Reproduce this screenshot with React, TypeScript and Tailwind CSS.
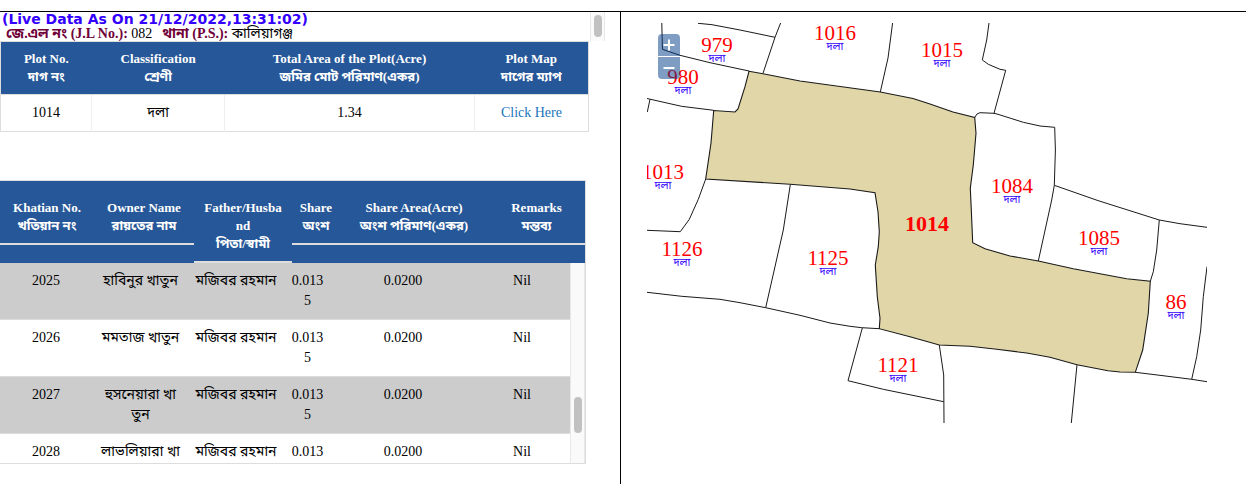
import React from "react";

const plotColumns = [
  ["Plot No.", "দাগ নং"],
  ["Classification", "শ্রেণী"],
  ["Total Area of the Plot(Acre)", "জমির মোট পরিমাণ(একর)"],
  ["Plot Map", "দাগের ম্যাপ"],
];

const ownerColumns = [
  ["Khatian No.", "খতিয়ান নং"],
  ["Owner Name", "রায়তের নাম"],
  ["Father/Husband", "পিতা/স্বামী"],
  ["Share", "অংশ"],
  ["Share Area(Acre)", "অংশ পরিমাণ(একর)"],
  ["Remarks", "মন্তব্য"],
];

const owners = [
  ["2025", "হাবিনুর খাতুন", "মজিবর রহমান", "0.0135", "0.0200", "Nil"],
  ["2026", "মমতাজ খাতুন", "মজিবর রহমান", "0.0135", "0.0200", "Nil"],
  ["2027", "হুসনেয়ারা খা\nতুন", "মজিবর রহমান", "0.0135", "0.0200", "Nil"],
  ["2028", "লাভলিয়ারা খা\nতুন", "মজিবর রহমান", "0.0135", "0.0200", "Nil"],
];

const headPadding = ["px-2", "px-2", "px-2", "px-1", "px-2", "px-2"];
const cellPadding = ["px-2", "px-0", "px-1", "px-2", "px-2", "px-2"];

const selectedPlot =
  "749,71.3 763,73.7 800,81 880.3,92 913,98.5 930,104 953,112 974.7,117.5 976,133.3 973.3,165 970.3,188.3 971.3,210 972.7,242.7 985,248.7 1010,256 1038.3,261 1073.3,268.7 1126.7,278.7 1150.3,281.3 1148.3,313.3 1142.7,350 1135.3,372.3 1120,372 1108,370.7 1077,364.7 1050,357.3 1026.7,353 996.7,349.3 970,346.3 939.3,345 910,336.7 879.3,328.7 880,318.3 877.3,296.7 875.3,265 878.3,246.7 879.3,231.7 878,211.7 875,192.7 850,189 790,184.3 705.7,179 711,143 713.7,110.5 735,112 738,109 745,86.7";

const boundaries = [
  "661.8,23 662.4,49.3 680,55.3 710,62.7 749,71",
  "698,23.3 712,24.7 740,30 775,37.3",
  "780.6,23 775,37.3 763,73.3",
  "892.6,23 888,58 880.3,92",
  "647,98.5 681.5,106.3 713.7,110.3",
  "650,99.3 647.3,112",
  "705.7,179 698.3,199.3 689.3,219.3 680.3,231.7 647,230.3",
  "790.3,184.7 783.3,230 765.7,307.7",
  "647,292.3 681.7,296.3 720,299.3 740,302.7 765.7,307.7 800,315.3 830,323 850,326.3 861.7,327.7 879.3,328.7",
  "862.3,328 848,380.7 883.3,389.3 943.7,401.7",
  "939.3,345 943.7,375 944,423",
  "1077,364.7 1071.3,423",
  "974.7,117.5 977,114 980,112.7 994,113.3 998,114.3 1023.3,122.3 1040,126 1054.7,127.3 1055.4,150 1054.3,185.3 1051.7,200 1038.3,261",
  "989,23 986.7,40 982.3,60 988.3,64.3 1000,69.3 1005.7,70.3 994,113.3",
  "1054.3,185.3 1098,200.6 1159.3,220 1180,223.7 1207,227.3",
  "1159.3,220 1156.7,250 1153.3,271.7 1150.3,281.3",
  "1207,266.7 1203.3,296.7 1200.7,330 1196.7,356.7 1191.7,379.3",
  "1135.3,372.3 1163,375.7 1191.7,379.3 1207,381.7",
];

const labels = [
  { plot: "979", x: 717, y: 52 },
  { plot: "980", x: 683, y: 84 },
  { plot: "1016", x: 835, y: 40 },
  { plot: "1015", x: 942, y: 57 },
  { plot: "1013", x: 663, y: 179 },
  { plot: "1084", x: 1012, y: 193 },
  { plot: "1126", x: 682, y: 256 },
  { plot: "1125", x: 828, y: 265 },
  { plot: "1085", x: 1099, y: 245 },
  { plot: "86", x: 1176, y: 309 },
  { plot: "1121", x: 898, y: 372 },
];

function PlotTable() {
  return (
    <table className="w-full table-fixed border-collapse border border-[#dddddd] text-center text-sm">
      <colgroup>
        <col className="w-[15.5%]" />
        <col className="w-[22.6%]" />
        <col className="w-[42.5%]" />
        <col />
      </colgroup>
      <thead className="bg-[#265798] text-[13px] text-white">
        <tr>
          {plotColumns.map(([en, bn]) => (
            <th key={en} className="border-b border-[#dddddd] px-2 py-2 font-bold leading-[18px]">
              {en}
              <br />
              {bn}
            </th>
          ))}
        </tr>
      </thead>
      <tbody>
        <tr className="leading-5">
          <td className="border-r border-[#eeeeee] p-2">1014</td>
          <td className="border-r border-[#eeeeee] p-2">দলা</td>
          <td className="border-r border-[#eeeeee] p-2">1.34</td>
          <td className="p-2">
            <a href="#map" className="text-[#1c75bc]">
              Click Here
            </a>
          </td>
        </tr>
      </tbody>
    </table>
  );
}

function OwnerTable() {
  return (
    <div className="relative border-y border-r border-[#dddddd]">
      <table className="block text-center text-sm">
        <thead className="block bg-[#265798] pt-[10px] text-[13px] text-white">
          <tr className="grid grid-cols-[94fr_100fr_98fr_48fr_148fr_97fr] items-start">
            {ownerColumns.map(([en, bn], i) => (
              <th
                key={en}
                className={`border-b-2 border-[#dddddd] py-2 font-bold leading-[18px] [overflow-wrap:anywhere] ${headPadding[i]}`}
              >
                {en}
                <br />
                {bn}
              </th>
            ))}
          </tr>
        </thead>
        <tbody className="mr-[15px] block h-[200px] overflow-hidden">
          {owners.map((row) => (
            <tr
              key={row[0]}
              className="grid min-h-[57px] grid-cols-[92fr_97fr_94fr_49fr_142fr_96fr] border-b border-[#dddddd] leading-5 odd:bg-[#cccccc]"
            >
              {row.map((cell, i) => (
                <td key={i} className={`whitespace-pre-line break-all py-2 ${cellPadding[i]}`}>
                  {cell}
                </td>
              ))}
            </tr>
          ))}
        </tbody>
      </table>
      <div className="absolute bottom-0 right-0 h-[200px] w-[15px] border-x border-[#e8e8e8] bg-[#fafafa]">
        <div className="mx-auto mt-[134px] h-9 w-2 rounded-full bg-[#c1c1c1]" />
      </div>
    </div>
  );
}

function PlotMap() {
  return (
    <div id="map" className="relative max-w-[560px]">
      <svg viewBox="647 23 560 400" className="block w-full" role="group" aria-label="Plot map">
        <polygon points={selectedPlot} fill="#e0d6a8" stroke="#1a1a1a" strokeWidth="1.1" />
        {boundaries.map((points) => (
          <polyline key={points} points={points} fill="none" stroke="#1a1a1a" strokeWidth="1" />
        ))}
        {labels.map(({ plot, x, y }) => (
          <g key={plot} textAnchor="middle">
            <text x={x} y={y} fontSize="21" fill="#ff0000">
              {plot}
            </text>
            <text x={x} y={y + 10} fontSize="11" fill="#3300ff">
              দলা
            </text>
          </g>
        ))}
        <text x="927" y="231" fontSize="22" fontWeight="bold" textAnchor="middle" fill="#ff0000">
          1014
        </text>
      </svg>
      <div className="absolute left-[11px] top-[11px] flex flex-col gap-px">
        <button
          type="button"
          aria-label="Zoom in"
          className="flex h-[22px] w-[22px] items-center justify-center rounded-t-sm bg-[#003c88]/50 text-white"
        >
          <svg viewBox="0 0 12 12" className="h-3 w-3" stroke="currentColor" strokeWidth="2">
            <path d="M6 .5v11M.5 6h11" />
          </svg>
        </button>
        <button
          type="button"
          aria-label="Zoom out"
          className="flex h-[22px] w-[22px] items-center justify-center rounded-b-sm bg-[#003c88]/50 text-white"
        >
          <svg viewBox="0 0 12 12" className="h-3 w-3" stroke="currentColor" strokeWidth="2">
            <path d="M.5 6h11" />
          </svg>
        </button>
      </div>
    </div>
  );
}

export default function App() {
  return (
    <div className="bg-white pt-[11px] font-['Liberation_Serif','Noto_Sans_Bengali','Noto_Sans',serif] text-black">
      <main className="grid grid-cols-[621fr_625fr] border-t border-black">
        <section className="min-w-0 border-r border-black pb-5">
          <div className="flex">
            <div className="h-[29px] grow whitespace-nowrap">
              <p className="pl-[2px] font-['DejaVu_Sans',sans-serif] text-sm font-bold leading-[14px] text-[#3300ff]">
                (Live Data As On 21/12/2022,13:31:02)
              </p>
              <p className="pl-[6px] text-sm leading-[15px]">
                <b className="text-[#700038]">জে.এল নং (J.L No.):</b> 082
                <b className="ml-[10px] text-[#700038]">থানা (P.S.):</b> কালিয়াগঞ্জ
              </p>
            </div>
            <div className="mr-[15px] w-[15px] border-x border-[#e8e8e8] bg-[#fafafa] pt-[3px]">
              <div className="mx-auto h-[22px] w-2 rounded-full bg-[#c1c1c1]" />
            </div>
          </div>
          <div className="mr-[31px]">
            <PlotTable />
          </div>
          <div className="mr-[34px] mt-12">
            <OwnerTable />
          </div>
        </section>
        <section className="min-w-0 pl-[26px] pt-[11px]">
          <PlotMap />
        </section>
      </main>
    </div>
  );
}
